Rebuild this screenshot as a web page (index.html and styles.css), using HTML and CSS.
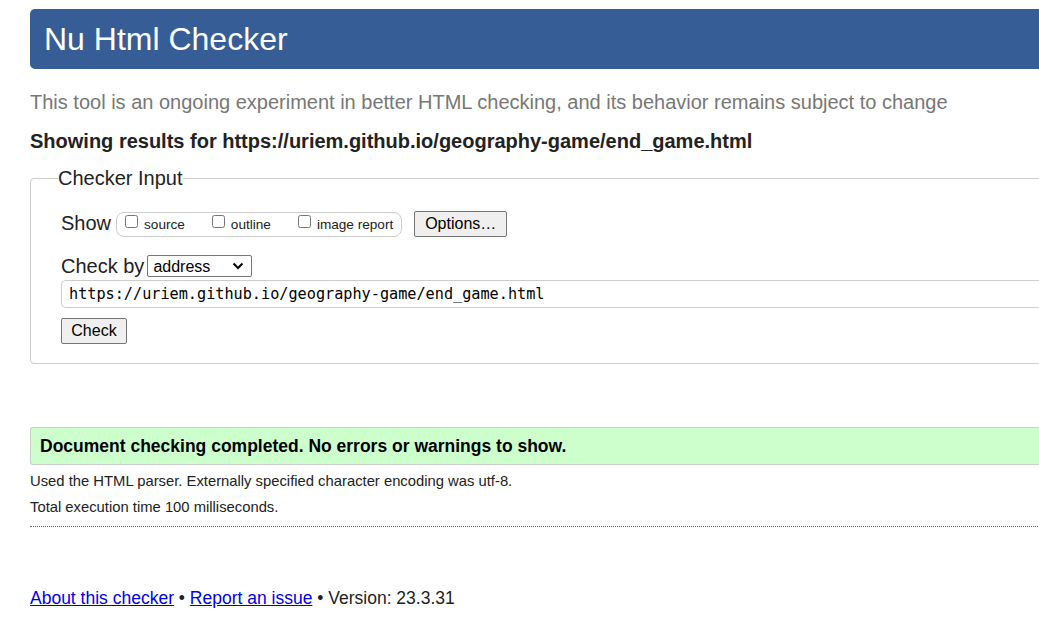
FILE: index.html
```html
<!DOCTYPE html>
<html lang="en">
<head>
<meta charset="utf-8">
<title>Nu Html Checker</title>
<link rel="stylesheet" href="styles.css">
</head>
<body>
<div class="page">
  <h1 class="banner">Nu Html Checker</h1>
  <p class="intro">This tool is an ongoing experiment in better HTML checking, and its behavior remains subject to change</p>
  <p class="showing">Showing results for https://uriem.github.io/geography-game/end_game.html</p>

  <fieldset class="checker">
    <legend>Checker Input</legend>
    <div class="row show-row">
      <span class="row-label">Show</span>
      <span class="opts">
        <label class="opt"><input type="checkbox"> source</label>
        <label class="opt"><input type="checkbox"> outline</label>
        <label class="opt"><input type="checkbox"> image report</label>
      </span>
      <button class="btn options-btn" type="button">Options…</button>
    </div>
    <div class="row by-row">
      <span class="row-label">Check by</span>
      <select class="sel"><option>address</option></select>
    </div>
    <div class="url">https://uriem.github.io/geography-game/end_game.html</div>
    <button class="btn check-btn" type="button">Check</button>
  </fieldset>

  <div class="success">Document checking completed. No errors or warnings to show.</div>
  <p class="details">Used the HTML parser. Externally specified character encoding was utf-8.</p>
  <p class="details second">Total execution time 100 milliseconds.</p>
  <hr class="dotted">

  <p class="footer"><a href="#">About this checker</a> • <a href="#">Report an issue</a> • Version: 23.3.31</p>
</div>
</body>
</html>
```

FILE: styles.css
```css
html, body {
  margin: 0;
  padding: 0;
  background: #fff;
  overflow: hidden;
}
body {
  font-family: "Liberation Sans", Arial, sans-serif;
  color: #222;
}
.page {
  width: 1060px;
  padding: 9px 0 0 30px;
}
.banner {
  margin: 0;
  height: 60px;
  line-height: 60px;
  padding-left: 14px;
  background: #365d95;
  color: #fff;
  font-size: 32px;
  font-weight: normal;
  border-radius: 5px 0 0 5px;
}
.intro {
  margin: 21px 0 0;
  font-size: 20px;
  line-height: 24px;
  color: #777;
}
.showing {
  margin: 15px 0 0;
  font-size: 20px;
  line-height: 24px;
  font-weight: bold;
  color: #222;
}
.checker {
  margin: 13px 0 0;
  padding: 0 0 19px 30px;
  border: 1px solid #ccc;
  border-radius: 4px 0 0 4px;
  min-width: 0;
}
.checker legend {
  margin-left: -3px;
  padding: 0;
  font-size: 20px;
  line-height: 24px;
  color: #222;
}
.row {
  display: flex;
  align-items: center;
}
.row-label {
  font-size: 20px;
  line-height: 24px;
}
.show-row {
  margin-top: 21px;
  height: 26px;
}
.show-row .row-label {
  margin-right: 5px;
  position: relative;
  top: -1px;
}
.opts {
  display: flex;
  align-items: center;
  gap: 25px;
  height: 23px;
  padding: 0 8px 0 6px;
  border: 1px solid #ccc;
  border-radius: 8px;
}
.opt {
  display: flex;
  align-items: center;
  font-size: 13.6px;
  line-height: 16px;
  color: #222;
  position: relative;
  top: 1px;
}
.opt input {
  width: 13px;
  height: 13px;
  margin: 0 6px 0 2px;
  position: relative;
  top: -4px;
}
.btn {
  font-family: "Liberation Sans", Arial, sans-serif;
  font-size: 16px;
  color: #000;
  background: #efefef;
  border: 1px solid #767676;
  border-radius: 2px;
  padding: 0 9px;
  height: 26px;
}
.options-btn {
  margin-left: 12px;
  width: 93px;
}
.by-row {
  margin-top: 18px;
  height: 22px;
}
.by-row .row-label {
  margin-right: 3px;
}
.sel {
  -webkit-appearance: none;
  appearance: none;
  width: 105px;
  height: 22px;
  padding: 0 0 0 5px;
  font-family: "Liberation Sans", Arial, sans-serif;
  font-size: 16px;
  color: #000;
  border: 1px solid #767676;
  border-radius: 2px;
  background-color: #fff;
  background-image: url("data:image/svg+xml,%3Csvg xmlns='http://www.w3.org/2000/svg' width='12' height='8' viewBox='0 0 12 8'%3E%3Cpath d='M1.5 1.5 L6 6 L10.5 1.5' fill='none' stroke='%23000' stroke-width='2'/%3E%3C/svg%3E");
  background-repeat: no-repeat;
  background-position: right 7px center;
}
.url {
  margin-top: 3px;
  height: 26px;
  line-height: 26px;
  padding-left: 7px;
  border: 1px solid #ccc;
  border-right: none;
  border-radius: 5px 0 0 5px;
  font-family: "DejaVu Sans Mono", "Liberation Mono", monospace;
  font-size: 15.2px;
  color: #000;
}
.check-btn {
  display: block;
  margin-top: 10px;
  width: 66px;
  padding: 0;
}
.success {
  margin-top: 63px;
  height: 36px;
  line-height: 36px;
  padding-left: 9px;
  background: #ccffcc;
  border: 1px solid #ccc;
  border-right: none;
  border-radius: 3px 0 0 3px;
  font-size: 17.5px;
  font-weight: bold;
  color: #000;
}
.details {
  margin: 8px 0 0;
  font-size: 14.8px;
  line-height: 17px;
  color: #222;
}
.details.second {
  margin-top: 9px;
}
.dotted {
  margin: 10px 0 0;
  border: none;
  border-top: 1px dotted #666;
  height: 0;
}
.footer {
  margin: 61px 0 0;
  font-size: 17.5px;
  line-height: 21px;
  color: #222;
}
.footer a {
  color: #00e;
  text-decoration: underline;
}
```
